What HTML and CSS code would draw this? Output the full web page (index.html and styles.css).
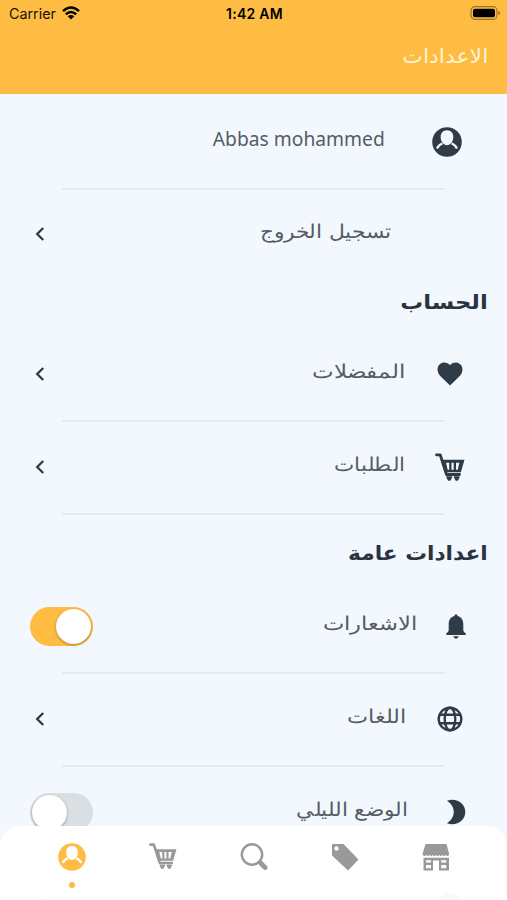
FILE: index.html
```html
<!DOCTYPE html>
<html lang="ar" dir="rtl">
<head>
<meta charset="utf-8">
<title>الاعدادات</title>
<link rel="stylesheet" href="styles.css">
</head>
<body>
<svg class="defs" width="0" height="0">
  <symbol id="user" viewBox="0 0 30 30"><circle cx="15" cy="15" r="14.8" fill="currentColor"/><path d="M5 21.500Q7 17.500 10.500 16.500M25 21.500Q23 17.500 19.500 16.500" fill="none" stroke="var(--cut)" stroke-width="2.300"/><path d="M15 3.200c4 0 6.300 2.800 6.300 6.800 0 4.500-2.700 8.200-6.300 8.200s-6.300-3.700-6.300-8.200c0-4 2.300-6.800 6.300-6.800z" fill="var(--cut)"/></symbol>
  <symbol id="cart" viewBox="0 0 30 28"><path d="M1.500 1.800h3.700l6.300 19.700h13" fill="none" stroke="currentColor" stroke-width="2.800" stroke-linecap="round" stroke-linejoin="round"/><path fill="currentColor" fill-rule="evenodd" d="M6 6.800h23.500l-3.600 12.400H9.600zM11 9.800l1.700 7h1.500v-7zM16.500 9.800v7h2.200v-7zM21 9.800v7h1.700l1.700-7z"/><path fill="currentColor" stroke="currentColor" stroke-width="1.500" stroke-linejoin="round" d="M12 24h4.500L15 27h-1.500zM19.500 24H24L22.500 27H21z"/></symbol>
  <symbol id="chev" viewBox="0 0 10 16"><path d="M8.200 2 2.200 8l6 6" fill="none" stroke="currentColor" stroke-width="2.300"/></symbol>
</svg>
<div class="screen">
  <header class="top">
    <div class="status" dir="ltr">
      <div class="carrier"><span>Carrier</span><svg width="18" height="14" viewBox="0 0 18 14"><path d="M1 5.200Q9-2.200 17 5.200M3.800 8.300q5.200-4.600 10.400 0" fill="none" stroke="#000" stroke-width="2.500"/><path d="M9 13.500 5.700 10.200q3.300-2.600 6.600 0z"/></svg></div>
      <strong class="clock">1:42 AM</strong>
      <svg class="battery" width="31" height="14" viewBox="0 0 31 14"><rect x="1" y=".7" width="26" height="12.600" rx="3.800" fill="none" stroke="#9b7427" stroke-width="1.200"/><rect x="3" y="2.700" width="22" height="8.600" rx="2"/><path d="M28.500 5v4q1.800-.5 1.800-2t-1.800-2z" fill="#9b7427"/></svg>
    </div>
    <h1><span class="t t-title">الاعدادات</span></h1>
  </header>
  <main>
    <div class="row profile"><svg class="ic" width="30" height="30"><use href="#user"/></svg><span class="t t-name" dir="ltr">Abbas mohammed</span></div>
    <div class="row plain logout"><span class="t t-logout">تسجيل الخروج</span><svg class="chev"><use href="#chev"/></svg></div>
    <h2 class="account"><span class="t t-account">الحساب</span></h2>
    <div class="row fav"><svg class="ic" width="26" height="24" viewBox="0 0 26 24"><path fill="currentColor" d="M13 23.500 4 14.800C-.5 10.500-.3 5 2.800 2.200 6-.7 10.700.2 13 3.200c2.300-3 7-3.900 10.200-1C26.300 5 26.500 10.500 22 14.800z"/></svg><span class="t t-fav">المفضلات</span><svg class="chev"><use href="#chev"/></svg></div>
    <div class="row orders"><svg class="ic" width="30" height="28"><use href="#cart"/></svg><span class="t t-orders">الطلبات</span><svg class="chev"><use href="#chev"/></svg></div>
    <h2 class="general"><span class="t t-general">اعدادات عامة</span></h2>
    <div class="row notify"><svg class="ic" width="20" height="25" viewBox="0 0 20 25"><path fill="currentColor" d="M8.400 1.900a1.600 1.600 0 0 1 3.200 0C15.800 3 17.300 6.500 17.300 10v6c0 1.600 1 2.300 2.200 3.200.8.600.5 1.800-.5 1.800H1c-1 0-1.300-1.200-.5-1.800 1.200-.9 2.200-1.600 2.200-3.200v-6c0-3.500 1.500-7 5.700-8.100zM7.300 22.300h5.400q-.6 2.400-2.700 2.400t-2.700-2.400z"/></svg><span class="t t-notify">الاشعارات</span><span class="toggle on"><i></i></span></div>
    <div class="row lang"><svg class="ic" width="26" height="26" viewBox="0 0 26 26"><g fill="none" stroke="currentColor" stroke-width="2.400"><circle cx="13" cy="13" r="11.300"/><ellipse cx="13" cy="13" rx="5.300" ry="11.300"/><path d="M2.500 8.700h21M2.500 17.300h21"/></g></svg><span class="t t-lang">اللغات</span><svg class="chev"><use href="#chev"/></svg></div>
    <div class="row plain night"><svg class="ic" width="20" height="26" viewBox="0 0 20 26"><path fill="currentColor" d="M1 1.800C10-1.800 19.300 4 19.300 13S10 27.500 1 24.200C10 18.500 10 7.500 1 1.800z"/></svg><span class="t t-night">الوضع الليلي</span><span class="toggle"><i></i></span></div>
    <div class="row plain about"><svg class="ic" width="26" height="26" viewBox="0 0 26 26"><circle cx="13" cy="13" r="12" fill="currentColor"/></svg><svg class="chev"><use href="#chev"/></svg></div>
  </main>
  <nav>
    <a><svg width="28" height="28" viewBox="0 0 28 28"><path fill="currentColor" d="M3.500 1h21l2.500 9.500v1.500q-1.500 2-3.200 0-1.700 2-3.300 0-1.600 2-3.200 0-1.700 2-3.300 0-1.700 2-3.300 0-1.600 2-3.200 0-1.700 2-3.300 0-1.600 2-3.500 0v-1.500z"/><path fill="currentColor" fill-rule="evenodd" d="M1.500 14.800H27V27.500H17v-10h-6v10H1.500zM4 17.300v2.200h5v-2.200zM4 22v3.200h5V22zM19.200 17.300v2.200h5v-2.200zM19.200 22v3.200h5V22z"/></svg></a>
    <a><svg width="28" height="28" viewBox="0 0 28 28"><path fill="currentColor" fill-rule="evenodd" d="M2 1h10.500L27.500 16.500 17 27.500 1 12.500V2q0-1 1-1zM5.500 3.300a2.200 2.200 0 1 0 0 4.400 2.200 2.200 0 0 0 0-4.400z"/></svg></a>
    <a><svg width="28" height="28" viewBox="0 0 28 28"><circle cx="12" cy="11.500" r="10.200" fill="none" stroke="currentColor" stroke-width="2.400"/><path d="m18.500 18 1.500 1.500" stroke="currentColor" stroke-width="3"/><path d="m20.500 20 4.700 4.600" stroke="currentColor" stroke-width="4.800" stroke-linecap="round"/></svg></a>
    <a><svg width="28" height="26"><use href="#cart"/></svg></a>
    <a class="active"><svg width="28" height="28"><use href="#user"/></svg><b></b></a>
  </nav>
</div>
</body>
</html>
```
FILE: styles.css
```css
* { box-sizing: border-box; }
body { margin: 0; font-family: "DejaVu Sans", sans-serif; color: #2f3b47; }
.defs { position: absolute; }
svg { display: block; flex: none; }
.screen { position: relative; width: 507px; height: 900px; overflow: hidden; background: #f3f8ff; --cut: #f3f8ff; }
.top { height: 94px; background: #ffbc43; }
.status { display: grid; grid-template-columns: 1fr auto 1fr; align-items: center; height: 26px; padding: 0 6px 0 9px; font: 14.3px Inter, sans-serif; color: #17120a; }
.carrier { display: flex; align-items: center; gap: 6px; }
.clock { font-size: 14px; font-weight: 600; color: #000; letter-spacing: .3px; margin-right: 1px; }
.battery { justify-self: end; }
h1, h2 { margin: 0; display: flex; align-items: center; padding-right: 19px; color: #2b343e; }
h1 { height: 59px; font-size: 20px; font-weight: 400; color: #fff3d6; }
h2 { font-size: 20px; font-weight: 700; }
.account { height: 47px; padding-bottom: 6px; }
.general { height: 66px; padding-top: 12px; }
main { padding-top: 2px; }
.row { display: flex; align-items: center; height: 93px; padding: 0 42px 2px 35px; position: relative; }
.row:not(.plain)::after { content: ""; position: absolute; left: 62px; right: 62px; bottom: -1px; height: 2px; background: #e6ebf0; }
.t { display: inline-block; white-space: nowrap; line-height: 30px; transform: scaleX(var(--sx, 1)); transform-origin: right center; }
.row .t { font-size: 19px; font-weight: 200; color: #555c66; padding-bottom: 6px; }
.row .t-name { font: 20px/30px "Noto Sans", sans-serif; --sx: .962; }
.t-title { --sx: 1.1; }
.t-logout { --sx: 1.15; }
.t-account { --sx: 1.14; }
.t-fav { --sx: 1.21; }
.t-orders { --sx: 1.13; }
.t-general { --sx: 1.085; }
.t-notify { --sx: 1.19; }
.t-lang { --sx: 1.18; }
.t-night { --sx: 1.14; }
.row .chev, .row .toggle { margin-right: auto; }
.chev { width: 10px; height: 16px; }
.profile .ic { margin-left: 47px; }
.profile { padding-right: 45px; }
.logout { height: 92px; padding-right: 116px; }
.fav { padding-right: 44px; }
.fav .ic { margin-left: 32px; }
.orders .ic { margin-left: 30px; }
.notify { padding-right: 41px; }
.notify .ic { margin-left: 29px; }
.lang { padding-right: 44px; }
.lang .ic { margin-left: 31px; }
.night { padding-right: 41px; }
.night .ic { margin-left: 38px; }
.about { padding-right: 44px; }
.notify, .night { padding-left: 30px; padding-bottom: 1px; }
.toggle { display: flex; width: 63px; height: 39px; padding: 2px; border-radius: 20px; background: #dadfe3; justify-content: flex-end; }
.toggle.on { background: #ffbc43; justify-content: flex-start; }
.toggle i { width: 35px; height: 35px; border-radius: 50%; background: #fff; box-shadow: 0 1px 3px #0005; }
nav { position: absolute; left: 0; right: 0; bottom: 0; height: 74px; padding: 17px 26px 0; display: grid; grid-template-columns: repeat(5, 1fr); background: #fffffff8; border-radius: 20px 20px 0 0; color: #999; --cut: #fff; }
nav a { display: flex; flex-direction: column; align-items: center; }
nav .active { color: #ffbc43; }
nav b { width: 6px; height: 6px; margin-top: 11px; border-radius: 50%; background: currentColor; }
```
